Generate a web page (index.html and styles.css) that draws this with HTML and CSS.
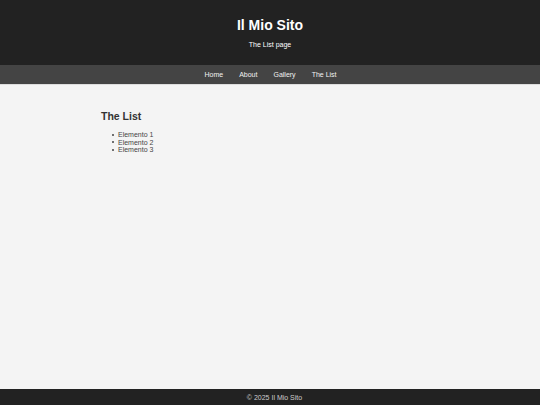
FILE: index.html
```html
<!DOCTYPE html>
<html lang="it">
  <head>
    <meta charset="UTF-8" />
    <meta name="viewport" content="width=device-width, initial-scale=1" />
    <title>The List - Il Mio Sito</title>
    <link rel="stylesheet" href="styles.css">
  </head>
  <body>
    <header class="site-header">
      <h1>Il Mio Sito</h1>
      <p>The List page</p>
    </header>

    <nav class="site-nav">
      <a href="#">Home</a>
      <a href="#">About</a>
      <a href="#">Gallery</a>
      <a href="#">The List</a>
    </nav>

    <main class="content">
      <h2>The List</h2>
      <ul>
        <li>Elemento 1</li>
        <li>Elemento 2</li>
        <li>Elemento 3</li>
      </ul>
    </main>

    <footer class="site-footer">
      &copy; 2025 Il Mio Sito
    </footer>
  </body>
</html>
```

FILE: styles.css
```css
body {
  margin: 0;
  min-height: 100vh;
  display: flex;
  flex-direction: column;
  background-color: #f4f4f4;
  color: #333;
  font-family: "Liberation Sans", Arial, sans-serif;
}

.site-header {
  background-color: #222;
  color: white;
  text-align: center;
  padding: 17px 0 16px 0;
}

.site-header h1 {
  margin: 0;
  font-size: 14px;
  line-height: 16px;
}

.site-header p {
  margin: 8px 0 0 0;
  font-size: 7px;
  line-height: 8px;
}

.site-nav {
  background-color: #444;
  display: flex;
  justify-content: center;
  gap: 16px;
  height: 19px;
  align-items: center;
  border-bottom: 1px solid #ddd;
  padding-left: 1px;
}

.site-nav a {
  color: #f2f2f2;
  text-decoration: none;
  font-size: 7px;
}

.content {
  flex: 1;
  padding: 24px 0 0 101px;
}

.content h2 {
  margin: 0 0 8px 0;
  font-size: 10.5px;
  line-height: 14px;
}

.content ul {
  margin: 0;
  padding-left: 17px;
  list-style: none;
  font-size: 7px;
  line-height: 7.5px;
  color: #444;
}

/* pallino piccolo, vicino al testo */
.content li::before {
  content: "";
  display: inline-block;
  width: 2px;
  height: 2px;
  border-radius: 50%;
  background-color: #444;
  margin: 0 4px 1px -6px;
  vertical-align: middle;
}

.site-footer {
  background-color: #222;
  color: #ccc;
  text-align: center;
  font-size: 7px;
  height: 16px;
  line-height: 17px;
  padding-left: 9px;
}
```
